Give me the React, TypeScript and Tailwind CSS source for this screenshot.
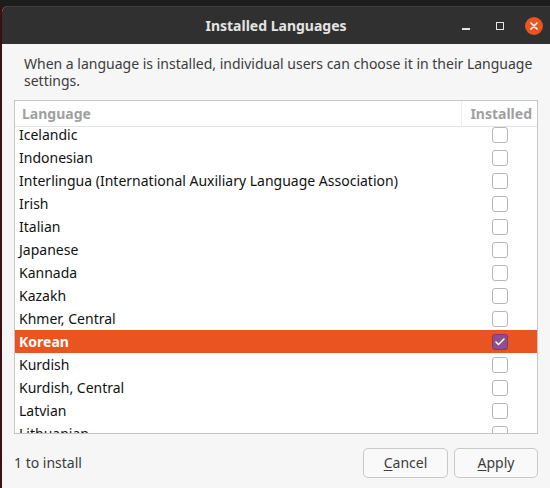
import { Check } from "lucide-react";

type Lang = { name: string; installed?: boolean; selected?: boolean };

const LANGS: Lang[] = [
  { name: "Icelandic" },
  { name: "Indonesian" },
  { name: "Interlingua (International Auxiliary Language Association)" },
  { name: "Irish" },
  { name: "Italian" },
  { name: "Japanese" },
  { name: "Kannada" },
  { name: "Kazakh" },
  { name: "Khmer, Central" },
  { name: "Korean", installed: true, selected: true },
  { name: "Kurdish" },
  { name: "Kurdish, Central" },
  { name: "Latvian" },
  { name: "Lithuanian" },
];

const FONT = "font-['Noto_Sans','DejaVu_Sans',sans-serif]";

function CheckBox({ on }: { on?: boolean }) {
  if (on) {
    return (
      <span className="flex h-[16px] w-[16px] items-center justify-center rounded-[3px] border border-[#7c3a75] bg-[#924d8b]">
        <Check size={12} strokeWidth={3} className="text-white" />
      </span>
    );
  }
  return <span className="block h-[16px] w-[16px] rounded-[3px] border border-[#b6b6b6] bg-white" />;
}

export default function App() {
  return (
    <div className={`flex h-[488px] w-[550px] flex-col overflow-hidden bg-[#1d1d1d] ${FONT}`}>
      <div className="h-[6px] shrink-0" />
      <div className="flex flex-1">
        <div className="w-[2px] bg-[#3a1014]" />
        <div className="flex flex-1 flex-col overflow-hidden rounded-tl-[6px] bg-[#f6f6f6]">
          {/* title bar */}
          <div className="relative flex h-[38px] shrink-0 items-center justify-center border-t border-[#3d3d3d] bg-[#303030]">
            <span className="text-[14px] font-bold text-[#e4e4e4]">Installed Languages</span>
            <div className="absolute right-[7px] top-0 flex h-full items-center">
              <span className="mr-[26px] mt-[7px] block h-[1.5px] w-[8px] bg-[#e6e6e6]" />
              <span className="mr-[21px] block h-[8px] w-[8px] border-[1.5px] border-[#e6e6e6]" />
              <span className="flex h-[18px] w-[18px] items-center justify-center rounded-full bg-[#e95420]">
                <svg width="8" height="8" viewBox="0 0 8 8">
                  <path d="M1 1L7 7M7 1L1 7" stroke="#fff" strokeWidth="1.6" strokeLinecap="round" />
                </svg>
              </span>
            </div>
          </div>

          {/* content */}
          <div className="flex flex-1 flex-col px-[12px]">
            <p className="pl-[10px] pt-[11px] text-[14px] leading-[17px] text-[#3c3c3c]">
              When a language is installed, individual users can choose it in their Language settings.
            </p>

            <div className="mt-[11px] flex h-[334px] flex-col overflow-hidden border border-[#c4c4c4] bg-white">
              <div className="flex h-[26px] shrink-0 border-b border-[#e4e4e4] text-[14px] font-bold text-[#a0a0a0]">
                <div className="flex flex-1 items-center pl-[7px]">Language</div>
                <div className="flex w-[76px] items-center justify-end border-l border-[#ededed] pr-[5px]">Installed</div>
              </div>
              <div className="-mt-[4px] flex flex-col">
                {LANGS.map((l) => (
                  <div
                    key={l.name}
                    className={
                      "flex h-[23px] shrink-0 items-center text-[14px] " +
                      (l.selected ? "bg-[#e95420] font-bold text-white" : "text-[#111]")
                    }
                  >
                    <div className="flex-1 pl-[4px]">{l.name}</div>
                    <div className="flex w-[76px] justify-center pl-[2px]">
                      <CheckBox on={l.installed} />
                    </div>
                  </div>
                ))}
              </div>
            </div>

            <div className="flex flex-1 items-center justify-between pt-[3px]">
              <span className="text-[14px] text-[#3c3c3c]">1 to install</span>
              <div className="flex gap-[6px]">
                <button className="h-[30px] w-[85px] rounded-[5px] border border-[#c9c9c9] bg-[#f9f9f9] text-[14px] text-[#3c3c3c]">
                  <span className="underline underline-offset-2">C</span>ancel
                </button>
                <button className="h-[30px] w-[84px] rounded-[5px] border border-[#c9c9c9] bg-[#f9f9f9] text-[14px] text-[#3c3c3c]">
                  <span className="underline underline-offset-2">A</span>pply
                </button>
              </div>
            </div>
          </div>
        </div>
      </div>
    </div>
  );
}
